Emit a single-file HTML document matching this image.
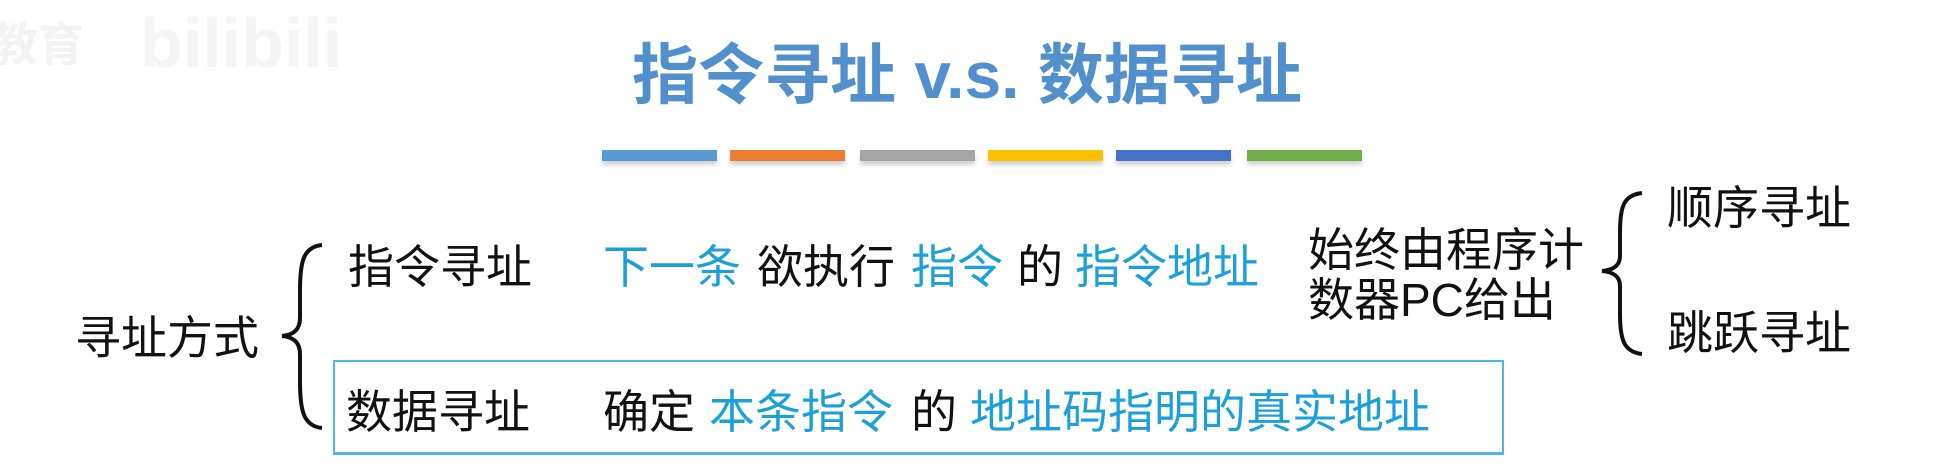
<!DOCTYPE html>
<html><head><meta charset="utf-8"><style>
html,body{margin:0;padding:0;background:#fff;}
body{width:1943px;height:466px;position:relative;overflow:hidden;font-family:"Liberation Sans","Noto Sans CJK SC",sans-serif;}
.t{position:absolute;font-size:46px;line-height:46px;color:#111;white-space:nowrap;}
.b{color:#1ca0da;}
.bar{position:absolute;top:150px;height:11px;width:115px;box-shadow:0 4px 4px rgba(0,0,0,.18);}
</style></head><body>
<div class="t" style="left:-8px;top:22px;font-size:46px;color:#f3f3f3;font-weight:bold">教育</div>
<div class="t" style="left:140px;top:8px;font-size:70px;line-height:70px;color:#f5f5f5;font-weight:bold">bilibili</div>

<div class="t" style="left:632px;top:42px;font-size:66px;line-height:66px;color:#5190cd;font-weight:bold;">指令寻址 v.s. 数据寻址</div>

<div class="bar" style="left:602px;background:#5b9bd5"></div>
<div class="bar" style="left:730px;background:#ed7d31"></div>
<div class="bar" style="left:860px;background:#a5a5a5"></div>
<div class="bar" style="left:988px;background:#ffc000"></div>
<div class="bar" style="left:1116px;background:#4472c4"></div>
<div class="bar" style="left:1247px;background:#70ad47"></div>

<div class="t" style="left:75px;top:315px;">寻址方式</div>
<svg style="position:absolute;left:276px;top:242px" width="52" height="190"><path d="M46,3 C28,5 24,18 24,48 L24,76 C24,88 17,93 6,94 C17,95 24,100 24,112 L24,140 C24,170 28,184 46,186" fill="none" stroke="#111" stroke-width="4"/></svg>

<div class="t" style="left:348px;top:244px;">指令寻址</div>
<div class="t b" style="left:603px;top:244px;">下一条</div>
<div class="t" style="left:757px;top:244px;">欲执行</div>
<div class="t b" style="left:911px;top:244px;">指令</div>
<div class="t" style="left:1017px;top:244px;">的</div>
<div class="t b" style="left:1075px;top:244px;">指令地址</div>

<div class="t" style="left:1308px;top:227px;">始终由程序计</div>
<div class="t" style="left:1308px;top:277px;">数器PC给出</div>
<svg style="position:absolute;left:1596px;top:190px" width="52" height="168"><path d="M46,3 C28,5 24,16 24,42 L24,66 C24,76 17,80 6,81 C17,82 24,86 24,96 L24,124 C24,150 28,162 46,164" fill="none" stroke="#111" stroke-width="4"/></svg>
<div class="t" style="left:1667px;top:185px;">顺序寻址</div>
<div class="t" style="left:1667px;top:310px;">跳跃寻址</div>

<div style="position:absolute;left:333px;top:360px;width:1167px;height:90px;border:2px solid #4cb6e8;border-bottom-width:3px;"></div>
<div class="t" style="left:346px;top:389px;">数据寻址</div>
<div class="t" style="left:603px;top:389px;">确定</div>
<div class="t b" style="left:709px;top:389px;">本条指令</div>
<div class="t" style="left:911px;top:389px;">的</div>
<div class="t b" style="left:970px;top:389px;">地址码指明的真实地址</div>
</body></html>
